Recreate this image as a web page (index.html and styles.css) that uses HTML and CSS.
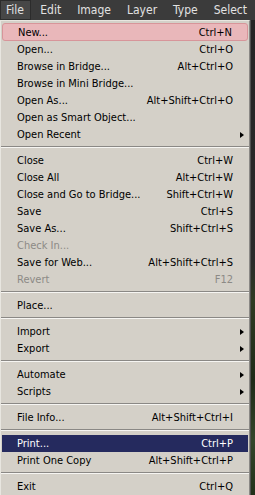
FILE: index.html
```html
<!DOCTYPE html>
<html>
<head>
<meta charset="utf-8">
<link rel="stylesheet" href="styles.css">
</head>
<body>
<div class="screen">
  <div class="menubar">
    <span class="top active">File</span>
    <span class="top">Edit</span>
    <span class="top">Image</span>
    <span class="top">Layer</span>
    <span class="top">Type</span>
    <span class="top">Select</span>
  </div>
  <div class="area">
    <div class="menu">
      <div class="item hover"><span class="label">New...</span><span class="key">Ctrl+N</span></div>
      <div class="item"><span class="label">Open...</span><span class="key">Ctrl+O</span></div>
      <div class="item"><span class="label">Browse in Bridge...</span><span class="key">Alt+Ctrl+O</span></div>
      <div class="item"><span class="label">Browse in Mini Bridge...</span></div>
      <div class="item"><span class="label">Open As...</span><span class="key">Alt+Shift+Ctrl+O</span></div>
      <div class="item"><span class="label">Open as Smart Object...</span></div>
      <div class="item"><span class="label">Open Recent</span><span class="arrow"></span></div>
      <div class="sep"></div>
      <div class="item"><span class="label">Close</span><span class="key">Ctrl+W</span></div>
      <div class="item"><span class="label">Close All</span><span class="key">Alt+Ctrl+W</span></div>
      <div class="item"><span class="label">Close and Go to Bridge...</span><span class="key">Shift+Ctrl+W</span></div>
      <div class="item"><span class="label">Save</span><span class="key">Ctrl+S</span></div>
      <div class="item"><span class="label">Save As...</span><span class="key">Shift+Ctrl+S</span></div>
      <div class="item disabled"><span class="label">Check In...</span></div>
      <div class="item"><span class="label">Save for Web...</span><span class="key">Alt+Shift+Ctrl+S</span></div>
      <div class="item disabled"><span class="label">Revert</span><span class="key">F12</span></div>
      <div class="sep"></div>
      <div class="item"><span class="label">Place...</span></div>
      <div class="sep"></div>
      <div class="item"><span class="label">Import</span><span class="arrow"></span></div>
      <div class="item"><span class="label">Export</span><span class="arrow"></span></div>
      <div class="sep"></div>
      <div class="item"><span class="label">Automate</span><span class="arrow"></span></div>
      <div class="item"><span class="label">Scripts</span><span class="arrow"></span></div>
      <div class="sep"></div>
      <div class="item"><span class="label">File Info...</span><span class="key">Alt+Shift+Ctrl+I</span></div>
      <div class="sep"></div>
      <div class="item selected"><span class="label">Print...</span><span class="key">Ctrl+P</span></div>
      <div class="item"><span class="label">Print One Copy</span><span class="key">Alt+Shift+Ctrl+P</span></div>
      <div class="sep"></div>
      <div class="item"><span class="label">Exit</span><span class="key">Ctrl+Q</span></div>
    </div>
    <div class="backdrop"></div>
  </div>
</div>
</body>
</html>
```

FILE: styles.css
```css
html, body {
  margin: 0;
  padding: 0;
  background: #2b2b2b;
}
.screen {
  width: 255px;
  height: 495px;
  overflow: hidden;
  font-family: "DejaVu Sans Condensed", "DejaVu Sans", sans-serif;
  font-stretch: condensed;
}
.menubar {
  height: 20px;
  background: #3b3b3b;
  display: flex;
  align-items: stretch;
  font-size: 12px;
  color: #e2e2e2;
  white-space: nowrap;
}
.top {
  display: flex;
  align-items: center;
  padding: 0 8px;
}
.top.active {
  background: #474747;
  box-shadow: inset 0 0 0 1px #2c2c2c;
  padding: 0 0 0 6px;
  width: 33px;
  box-sizing: border-box;
  margin-right: 1px;
}
.area {
  display: flex;
  height: 475px;
}
.menu {
  width: 248px;
  background: #d4d0c8;
  border-left: 1px solid #e8e6e0;
  border-top: 1px solid #e8e6e0;
  border-right: 1px solid #8a8885;
  padding-top: 3px;
  font-size: 11px;
  color: #000;
}
.backdrop {
  flex: 1;
  background: linear-gradient(#252525 0, #2a2a2a 240px, #2f3a22 280px, #1f2a18 360px, #34452a 420px, #22301a 475px);
  border-left: 1px solid #505050;
}
.item {
  height: 17px;
  display: grid;
  grid-template-columns: 1fr auto 16px;
  align-items: center;
  padding-left: 16px;
  white-space: nowrap;
  box-sizing: border-box;
}
.label {
  grid-column: 1;
}
.key {
  grid-column: 2;
}
.arrow {
  grid-column: 3;
  justify-self: start;
  margin-left: 7px;
  width: 0;
  height: 0;
  border-top: 3.5px solid transparent;
  border-bottom: 3.5px solid transparent;
  border-left: 4px solid #000;
}
.item.hover {
  margin: 0 1px 0 1px;
  padding-left: 15px;
  grid-template-columns: 1fr auto 15px;
  background: #e9b7ba;
  border: 1px solid #d7959a;
  border-radius: 3px;
  height: 18px;
  margin-top: -1px;
}
.item.selected {
  background: #252a5e;
  color: #fff;
  margin: 0 1px;
  padding-left: 15px;
  grid-template-columns: 1fr auto 15px;
}
.item.disabled {
  color: #8c8a86;
}
.sep {
  height: 9px;
  box-sizing: border-box;
  padding-top: 3px;
}
.sep::before {
  content: "";
  display: block;
  height: 1px;
  background: #8a8885;
  border-bottom: 1px solid #f6f5f2;
}
```
